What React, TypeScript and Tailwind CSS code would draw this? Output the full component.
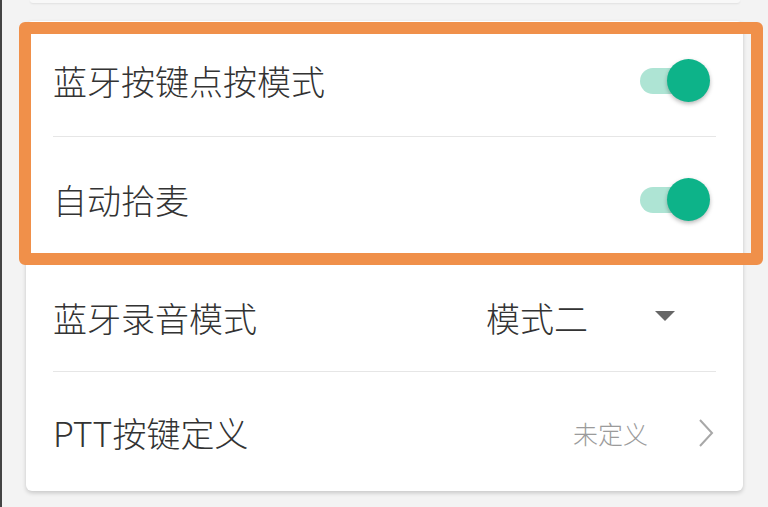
import React from "react";

const font = { fontFamily: '"Noto Sans CJK SC", "Noto Sans", sans-serif' };

function Toggle() {
  return (
    <div className="relative w-[70px] h-[44px] flex items-center">
      <div className="w-[60px] h-[26px] rounded-full bg-[#aee4d4]" />
      <div className="absolute right-0 top-0 w-[43px] h-[43px] rounded-full bg-[#0db389] shadow-[0_2px_4px_rgba(0,0,0,0.28)]" />
    </div>
  );
}

export default function App() {
  return (
    <div className="w-[768px] h-[507px] overflow-hidden bg-[#f3f3f3] border-l-2 border-[#444]" style={font}>
      <div className="relative h-full">
        {/* bottom of the card above */}
        <div className="mx-[28px] h-[3px] bg-[#f8f8f8] shadow-[0_1px_2px_rgba(0,0,0,0.08)] rounded-b" />

        {/* settings card */}
        <div className="ml-[24px] mt-[18px] w-[717px] bg-white rounded-[6px] shadow-[0_2px_4px_rgba(0,0,0,0.18)] px-[27px] text-[#333] font-light">
          <div className="h-[116px] pt-[5px] flex items-center justify-between border-b border-[#e6e6e6]">
            <span className="text-[34px] leading-none">蓝牙按键点按模式</span>
            <div className="mr-[6px]"><Toggle /></div>
          </div>
          <div className="h-[118px] pt-[8px] flex items-center justify-between border-b border-[#e6e6e6]">
            <span className="text-[34px] leading-none">自动拾麦</span>
            <div className="mr-[6px]"><Toggle /></div>
          </div>
          <div className="h-[117px] pt-[9px] flex items-center justify-between border-b border-[#e6e6e6]">
            <span className="text-[34px] leading-none">蓝牙录音模式</span>
            <div className="flex items-center">
              <span className="text-[34px] leading-none">模式二</span>
              <svg width="20" height="10" viewBox="0 0 20 10" className="ml-[67px] mr-[41px] mt-[-4px]">
                <path d="M0 0 L20 0 L10 10 Z" fill="#666" />
              </svg>
            </div>
          </div>
          <div className="h-[119px] pt-[3px] flex items-center justify-between">
            <span className="text-[34px] leading-none">PTT按键定义</span>
            <div className="flex items-center">
              <span className="text-[25px] leading-none text-[#9b9b9b]">未定义</span>
              <svg width="16" height="30" viewBox="0 0 16 30" className="ml-[50px] mr-[2px]">
                <path d="M2 2 L14 15 L2 28" fill="none" stroke="#a8a8a8" strokeWidth="2" />
              </svg>
            </div>
          </div>
        </div>

        {/* highlight annotation */}
        <div className="absolute left-[17px] top-[22px] w-[744px] h-[243px] border-[12px] border-[#f0904a] rounded-[6px]" />
      </div>
    </div>
  );
}
